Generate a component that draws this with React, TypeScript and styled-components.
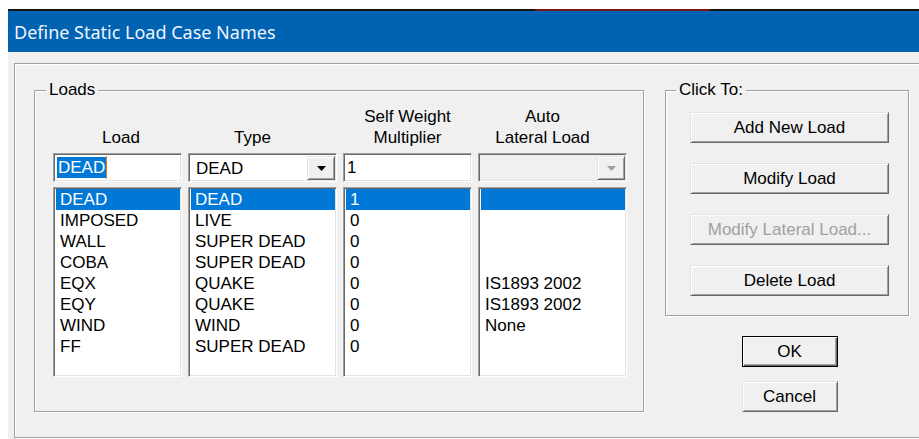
import styled, { createGlobalStyle, css } from "styled-components";

const GlobalStyle = createGlobalStyle`
  html, body {
    margin: 0;
    padding: 0;
    background: #ffffff;
    overflow: hidden;
  }
  body {
    font-family: "Liberation Sans", Arial, sans-serif;
    font-size: 17px;
    color: #000000;
  }
`;

const sunken = css`
  box-sizing: border-box;
  border: 1px solid;
  border-color: #a0a0a0 #ffffff #ffffff #a0a0a0;
  box-shadow: inset 1px 1px #696969, inset -1px -1px #e3e3e3;
`;

const raised = css`
  box-sizing: border-box;
  border: 1px solid;
  border-color: #e3e3e3 #696969 #696969 #e3e3e3;
  box-shadow: inset 1px 1px #ffffff, inset -1px -1px #a0a0a0;
  background: #f0f0f0;
`;

const Screen = styled.div`
  width: 919px;
  height: 439px;
  overflow: hidden;
  box-sizing: border-box;
  padding: 9px 0 0 8px;
  background: #ffffff;
`;

const Window = styled.div`
  width: 960px;
  height: 430px;
  display: flex;
  flex-direction: column;
  background: #f0f0f0;
`;

const TaskStrip = styled.div`
  height: 2px;
  flex: none;
  background: linear-gradient(
    to right,
    #161616 0 527px,
    #7a1414 527px 702px,
    #161616 702px
  );
`;

const TitleBar = styled.div`
  height: 41px;
  flex: none;
  display: flex;
  align-items: center;
  padding-left: 6px;
  background: #0063b1;
  color: #eef4ff;
  font-family: "Segoe UI", "Noto Sans", sans-serif;
  font-size: 18px;
`;

const Body = styled.div`
  flex: 1;
  padding: 11px 0 0 6px;
`;

const Frame = styled.div`
  height: 375px;
  box-sizing: border-box;
  border: 1px solid #a0a0a0;
  box-shadow: inset 1px 1px #ffffff, 1px 1px #ffffff;
  display: flex;
  align-items: flex-start;
  gap: 21px;
  padding: 16px 0 0 19px;
`;

const Group = styled.fieldset<{ $width: number }>`
  margin: 0;
  padding: 0;
  min-width: 0;
  width: ${(p) => p.$width}px;
  box-sizing: border-box;
  border: 1px solid #a0a0a0;
  box-shadow: inset 1px 1px #ffffff, 1px 1px #ffffff;
`;

const Caption = styled.legend<{ $indent: number }>`
  margin-left: ${(p) => p.$indent}px;
  padding: 0 3px;
  line-height: 20px;
`;

const LoadsGrid = styled.div`
  display: grid;
  grid-template-columns: 129px 149px 129px 149px;
  grid-template-rows: 42px 29px 190px;
  column-gap: 6px;
  row-gap: 5px;
  padding: 6px 0 34px 18px;
`;

const HeadCell = styled.div<{ $nudge?: number }>`
  width: 129px;
  box-sizing: border-box;
  padding-left: ${(p) => p.$nudge ?? 0}px;
  display: flex;
  align-items: flex-end;
  justify-content: center;
  text-align: center;
  line-height: 21px;
`;

const TextBox = styled.div`
  ${sunken};
  background: #ffffff;
  display: flex;
  align-items: center;
  padding-left: 3px;
  line-height: 21px;
`;

const Selection = styled.span`
  background: #0078d7;
  color: #ffffff;
  padding: 0 1px;
`;

const Caret = styled.span`
  width: 1px;
  height: 23px;
  background: #e8792c;
`;

const Combo = styled.div<{ $disabled?: boolean }>`
  ${sunken};
  background: ${(p) => (p.$disabled ? "#f0f0f0" : "#ffffff")};
  display: flex;
  align-items: stretch;
  padding: 2px 1px 1px 0;
`;

const ComboText = styled.div`
  flex: 1;
  display: flex;
  align-items: center;
  padding: 2px 0 0 7px;
`;

const DropButton = styled.div`
  ${raised};
  width: 28px;
  display: flex;
  align-items: center;
  justify-content: center;
`;

const ListBox = styled.div`
  ${sunken};
  background: #ffffff;
  padding: 1px 1px 0 2px;
  overflow: hidden;
`;

const ListRow = styled.div<{ $selected?: boolean }>`
  height: 21px;
  line-height: 21px;
  padding-left: 4px;
  white-space: nowrap;
  background: ${(p) => (p.$selected ? "#0078d7" : "transparent")};
  color: ${(p) => (p.$selected ? "#ffffff" : "#000000")};
`;

const ButtonStack = styled.div`
  display: flex;
  flex-direction: column;
  gap: 20px;
  padding: 12px 0 19px 24px;
`;

const Side = styled.div`
  width: 244px;
  display: flex;
  flex-direction: column;
  align-items: center;
`;

const Button = styled.button<{ $width: number; $default?: boolean }>`
  ${raised};
  width: ${(p) => p.$width}px;
  height: 31px;
  padding: 0;
  font-family: "Liberation Sans", Arial, sans-serif;
  font-size: 17px;
  color: #000000;
  &:disabled {
    color: #a0a0a0;
  }
  ${(p) =>
    p.$default &&
    css`
      border-color: #000000;
      box-shadow: inset 1px 1px #ffffff, inset -1px -1px #696969,
        inset -2px -2px #a0a0a0;
    `}
`;

const DialogButtons = styled.div`
  display: flex;
  flex-direction: column;
  gap: 14px;
  margin: 20px 0 0 5px;
`;

const Arrow = ({ color }: { color: string }) => (
  <svg width="9" height="5" viewBox="0 0 9 5">
    <path d="M0 0h9L4.5 5z" fill={color} />
  </svg>
);

type LoadCase = {
  name: string;
  type: string;
  multiplier: string;
  lateral: string;
};

const loads: LoadCase[] = [
  { name: "DEAD", type: "DEAD", multiplier: "1", lateral: "" },
  { name: "IMPOSED", type: "LIVE", multiplier: "0", lateral: "" },
  { name: "WALL", type: "SUPER DEAD", multiplier: "0", lateral: "" },
  { name: "COBA", type: "SUPER DEAD", multiplier: "0", lateral: "" },
  { name: "EQX", type: "QUAKE", multiplier: "0", lateral: "IS1893 2002" },
  { name: "EQY", type: "QUAKE", multiplier: "0", lateral: "IS1893 2002" },
  { name: "WIND", type: "WIND", multiplier: "0", lateral: "None" },
  { name: "FF", type: "SUPER DEAD", multiplier: "0", lateral: "" },
];

const columns: (keyof LoadCase)[] = ["name", "type", "multiplier", "lateral"];

export default function App() {
  const selected = 0;

  return (
    <Screen>
      <GlobalStyle />
      <Window>
        <TaskStrip />
        <TitleBar>Define Static Load Case Names</TitleBar>
        <Body>
          <Frame>
            <Group $width={610}>
              <Caption $indent={11}>Loads</Caption>
              <LoadsGrid>
                <HeadCell $nudge={7}>Load</HeadCell>
                <HeadCell>Type</HeadCell>
                <HeadCell>
                  Self Weight
                  <br />
                  Multiplier
                </HeadCell>
                <HeadCell>
                  Auto
                  <br />
                  Lateral Load
                </HeadCell>

                <TextBox>
                  <Selection>DEAD</Selection>
                  <Caret />
                </TextBox>
                <Combo>
                  <ComboText>DEAD</ComboText>
                  <DropButton>
                    <Arrow color="#000000" />
                  </DropButton>
                </Combo>
                <TextBox>1</TextBox>
                <Combo $disabled>
                  <ComboText />
                  <DropButton>
                    <Arrow color="#a0a0a0" />
                  </DropButton>
                </Combo>

                {columns.map((key) => (
                  <ListBox key={key}>
                    {loads.map((row, i) => (
                      <ListRow key={i} $selected={i === selected}>
                        {row[key]}
                      </ListRow>
                    ))}
                  </ListBox>
                ))}
              </LoadsGrid>
            </Group>

            <Side>
              <Group $width={244}>
                <Caption $indent={10}>Click To:</Caption>
                <ButtonStack>
                  <Button $width={199}>Add New Load</Button>
                  <Button $width={199}>Modify Load</Button>
                  <Button $width={199} disabled>
                    Modify Lateral Load...
                  </Button>
                  <Button $width={199}>Delete Load</Button>
                </ButtonStack>
              </Group>
              <DialogButtons>
                <Button $width={96} $default>
                  OK
                </Button>
                <Button $width={96}>Cancel</Button>
              </DialogButtons>
            </Side>
          </Frame>
        </Body>
      </Window>
    </Screen>
  );
}
